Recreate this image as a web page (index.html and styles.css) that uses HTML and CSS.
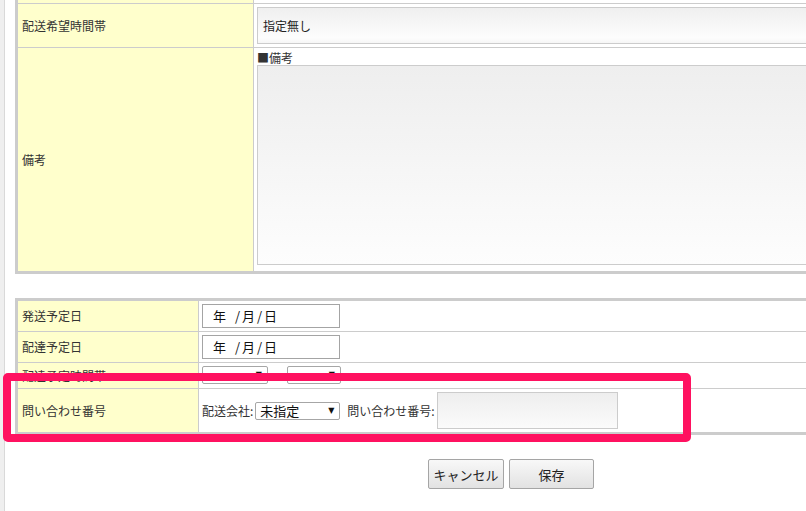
FILE: index.html
```html
<!DOCTYPE html>
<html lang="ja">
<head>
<meta charset="utf-8">
<title>配送情報</title>
<link rel="stylesheet" href="styles.css">
</head>
<body>
<div class="page">
  <div class="rail"></div>
  <div class="main">
    <div class="panel p1">
      <div class="row first r0"><div class="lab"></div><div class="val"></div></div>
      <div class="row r1">
        <div class="lab">配送希望時間帯</div>
        <div class="val"><div class="timebox">指定無し</div></div>
      </div>
      <div class="row r2">
        <div class="lab">備考</div>
        <div class="val col">
          <div class="note-title">■備考</div>
          <div class="note-area"></div>
        </div>
      </div>
    </div>

    <div class="panel p2">
      <div class="row first rd rd1">
        <div class="lab">発送予定日</div>
        <div class="val"><div class="date">年 /月/日</div></div>
      </div>
      <div class="row rd">
        <div class="lab">配達予定日</div>
        <div class="val"><div class="date">年 /月/日</div></div>
      </div>
      <div class="row rt">
        <div class="lab">配達予定時間帯</div>
        <div class="val">
          <div class="sel sel-a"><span class="arrow">▼</span></div>
          <div class="sel sel-b"><span class="arrow">▼</span></div>
        </div>
      </div>
      <div class="row rq">
        <div class="lab">問い合わせ番号</div>
        <div class="val">
          <span class="fld">配送会社:</span>
          <div class="sel sel-c"><span class="seltext">未指定</span><span class="arrow">▼</span></div>
          <span class="fld fld2">問い合わせ番号:</span>
          <div class="track"></div>
        </div>
      </div>
    </div>

    <div class="actions">
      <button class="btn btn-cancel">キャンセル</button>
      <button class="btn btn-save">保存</button>
    </div>
  </div>
  <div class="highlight"></div>
</div>
</body>
</html>
```

FILE: styles.css
```css
* { box-sizing: border-box; }
html, body {
  margin: 0;
  padding: 0;
  width: 806px;
  height: 511px;
  overflow: hidden;
  background: #fff;
}
body {
  font-family: "Noto Sans CJK JP", "DejaVu Sans", sans-serif;
  font-size: 12px;
  color: #333;
  line-height: 14px;
}
.page {
  display: flex;
  position: relative;
  height: 511px;
}
.rail {
  flex: none;
  width: 5px;
  background: #efefef;
  border-right: 1px solid #d9d9d9;
}
.main {
  flex: none;
  width: 900px;
  padding-left: 10px;
}
.panel {
  border-left: 3px solid #ccc;
  border-bottom: 3px solid #ccc;
}
.p2 {
  border-top: 3px solid #ccc;
  margin-top: 24px;
}
.row {
  display: grid;
  grid-template-columns: 236px 1fr;
  border-top: 1px solid #ccc;
}
.p2 .row { grid-template-columns: 181px 1fr; }
.row.first { border-top: none; }
.lab {
  background: #ffffcc;
  border-right: 1px solid #ccc;
  display: flex;
  align-items: center;
  padding-left: 4px;
  color: #333;
}
.val {
  padding: 3px;
  display: flex;
  align-items: center;
}
.r0 { height: 3px; }
.r0 .val { padding: 0; }
.timebox {
  width: 100%;
  height: 37px;
  border: 1px solid #ccc;
  background: linear-gradient(#efefef, #fdfdfd 85%, #f6f6f6);
  display: flex;
  align-items: center;
  padding-left: 5px;
  font-size: 12px;
  color: #222;
}
.val.col {
  flex-direction: column;
  align-items: stretch;
  padding: 3px 3px 6px 3px;
}
.note-title {
  height: 14px;
  font-size: 12px;
  color: #333;
}
.note-area {
  height: 200px;
  border: 1px solid #ccc;
  background: linear-gradient(#eeeeee, #fdfdfd);
}
.rd { height: 31px; }
.rd1 { height: 30px; }
.rt { height: 26px; }
.rq { height: 44px; }
.date {
  width: 138px;
  height: 24px;
  border: 1px solid #a4a4a4;
  background: #fff;
  display: flex;
  align-items: center;
  padding-left: 10px;
  font-size: 13px;
  color: #111;
  letter-spacing: 2px;
  word-spacing: 2px;
}
.rt .val { padding-top: 3px; align-items: flex-start; }
.sel {
  height: 18px;
  border: 1px solid #a6a6a6;
  border-radius: 2px;
  background: #fff;
  display: flex;
  align-items: center;
  padding: 0 4px;
  position: relative;
}
.sel-a { width: 66px; }
.sel-b { width: 54px; margin-left: 19px; }
.sel-c { width: 85px; margin-left: 2px; }
.seltext { font-size: 13px; color: #111; }
.arrow {
  margin-left: auto;
  font-family: "DejaVu Sans", sans-serif;
  font-size: 8px;
  color: #111;
  line-height: 10px;
  margin-right: 1px;
}
.fld { font-size: 12px; color: #333; }
.fld2 { margin-left: 7px; }
.track {
  width: 181px;
  height: 37px;
  margin-left: 2px;
  border: 1px solid #ccc;
  background: linear-gradient(#eeeeee, #fbfbfb);
}
.actions {
  display: flex;
  gap: 5px;
  margin-top: 24px;
  padding-left: 413px;
}
.btn {
  height: 30px;
  border: 1px solid #a5a5a5;
  border-radius: 2px;
  background: linear-gradient(#f8f8f8, #e2e2e2);
  font-family: "Noto Sans CJK JP", sans-serif;
  font-size: 13px;
  color: #222;
  padding: 0;
}
.btn-cancel { width: 76px; }
.btn-save { width: 85px; }
.highlight {
  position: absolute;
  left: 3px;
  top: 373px;
  width: 688px;
  height: 69px;
  border: 8px solid #ff1160;
  border-radius: 5px;
}
```
